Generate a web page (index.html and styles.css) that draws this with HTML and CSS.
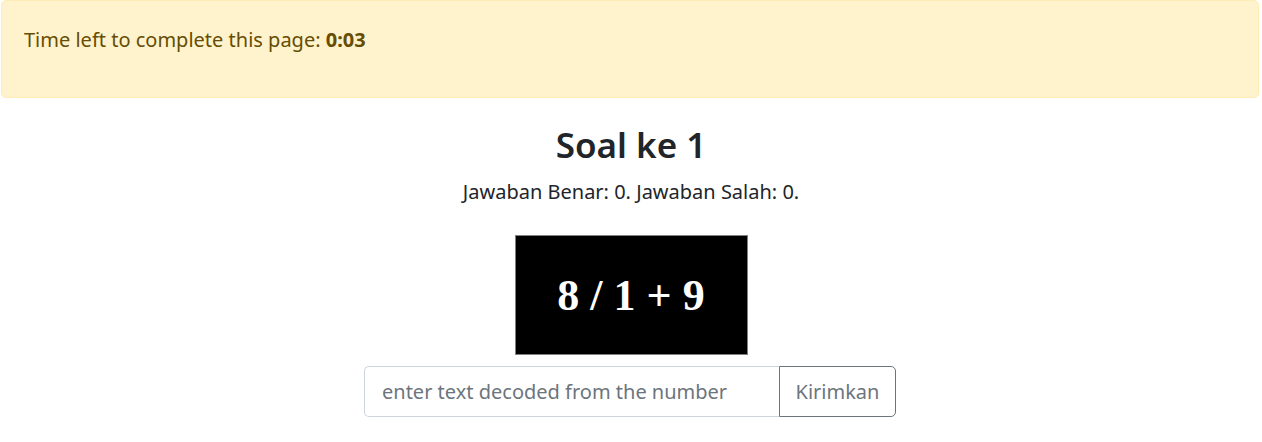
FILE: index.html
```html
<!DOCTYPE html>
<html>
<head>
<meta charset="utf-8">
<link rel="stylesheet" href="styles.css">
</head>
<body>
<div class="alert">Time left to complete this page: <b>0:03</b></div>
<main class="quiz">
  <h2 class="title">Soal ke 1</h2>
  <p class="score">Jawaban Benar: 0. Jawaban Salah: 0.</p>
  <div class="captcha">8 / 1 + 9</div>
  <form class="answer">
    <input class="field" type="text" placeholder="enter text decoded from the number">
    <button class="send" type="button">Kirimkan</button>
  </form>
</main>
</body>
</html>
```
FILE: styles.css
```css
html, body { margin: 0; padding: 0; background: #fff; }
body {
  font-family: "Noto Sans", "Open Sans", sans-serif;
  color: #212529;
  font-size: 20px;
}
.alert {
  margin: 0 3px 0 1px;
  height: 98px;
  box-sizing: border-box;
  padding: 24px 22px 0;
  background: #fff3cd;
  border: 1px solid #ffecb5;
  border-radius: 5px;
  color: #664d03;
  font-size: 20px;
  line-height: 30px;
}
.alert b { font-weight: 700; }
.quiz {
  display: flex;
  flex-direction: column;
  align-items: center;
}
.title {
  margin: 23px 0 0;
  font-size: 35px;
  line-height: 48px;
  font-weight: 600;
}
.score {
  margin: 8px 0 0;
  font-size: 20px;
  line-height: 30px;
}
.captcha {
  margin-top: 28px;
  width: 233px;
  height: 120px;
  box-sizing: border-box;
  background: #000;
  border: 1px solid #808080;
  color: #fff;
  font-family: "Liberation Serif", "Times New Roman", serif;
  font-weight: 700;
  font-size: 44px;
  display: flex;
  align-items: center;
  justify-content: center;
}
.answer {
  margin: 11px 0 0 -2px;
  display: flex;
}
.field {
  width: 415px;
  height: 51px;
  box-sizing: border-box;
  border: 1px solid #ced4da;
  border-right: none;
  border-radius: 5px 0 0 5px;
  padding: 0 17px;
  font-family: inherit;
  font-size: 20px;
  color: #495057;
  outline: none;
}
.field::placeholder { color: #6c757d; }
.send {
  width: 117px;
  height: 51px;
  box-sizing: border-box;
  border: 1px solid #6c757d;
  border-radius: 0 5px 5px 0;
  background: #fff;
  color: #6c757d;
  font-family: inherit;
  font-size: 20px;
  padding: 0;
}
```
